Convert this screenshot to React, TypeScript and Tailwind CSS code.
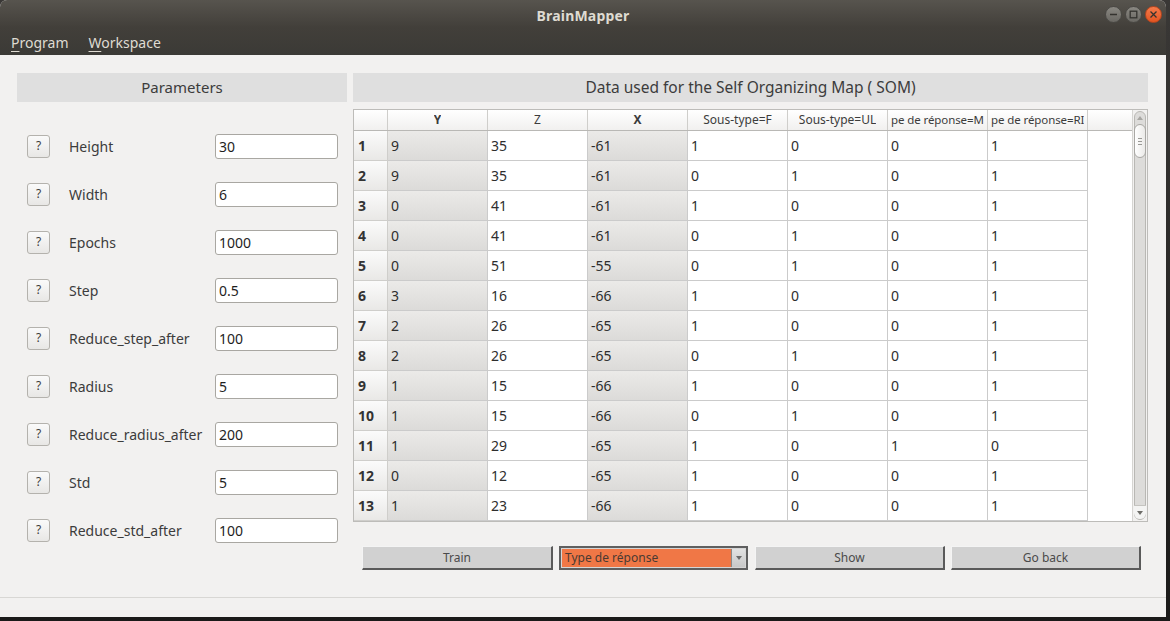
import React from 'react';

const PARAMS = [
  { label: 'Height', value: '30' },
  { label: 'Width', value: '6' },
  { label: 'Epochs', value: '1000' },
  { label: 'Step', value: '0.5' },
  { label: 'Reduce_step_after', value: '100' },
  { label: 'Radius', value: '5' },
  { label: 'Reduce_radius_after', value: '200' },
  { label: 'Std', value: '5' },
  { label: 'Reduce_std_after', value: '100' },
];

// headers wider than their column show only their middle part, as in Qt
const COLUMNS = [
  { name: 'Y', bold: true, left: false },
  { name: 'Z', bold: false, left: false },
  { name: 'X', bold: true, left: false },
  { name: 'Sous-type=F', bold: false, left: false },
  { name: 'Sous-type=UL', bold: false, left: false },
  { name: 'pe de réponse=M', bold: false, left: true },
  { name: 'pe de réponse=RI', bold: false, left: true },
];

const ROWS = [
  ['9', '35', '-61', '1', '0', '0', '1'],
  ['9', '35', '-61', '0', '1', '0', '1'],
  ['0', '41', '-61', '1', '0', '0', '1'],
  ['0', '41', '-61', '0', '1', '0', '1'],
  ['0', '51', '-55', '0', '1', '0', '1'],
  ['3', '16', '-66', '1', '0', '0', '1'],
  ['2', '26', '-65', '1', '0', '0', '1'],
  ['2', '26', '-65', '0', '1', '0', '1'],
  ['1', '15', '-66', '1', '0', '0', '1'],
  ['1', '15', '-66', '0', '1', '0', '1'],
  ['1', '29', '-65', '1', '0', '1', '0'],
  ['0', '12', '-65', '1', '0', '0', '1'],
  ['1', '23', '-66', '1', '0', '0', '1'],
  // only the top edge of row 14 peeks out below the viewport
  ['', '', '', '', '', '', ''],
];

const TitleButton: React.FC<{ kind: 'min' | 'max' | 'close' }> = ({ kind }) => (
  <div
    className={`w-[17px] h-[17px] rounded-full flex items-center justify-center border ${
      kind === 'close'
        ? 'bg-gradient-to-b from-[#f47a4a] to-[#e25420] border-[#b8461e]'
        : 'bg-gradient-to-b from-[#8a8882] to-[#6a6863] border-[#4a4945]'
    }`}
  >
    <svg width="9" height="9" viewBox="0 0 9 9" fill="none" stroke="#34332f" strokeWidth="1.3">
      {kind === 'min' && <path d="M1 4.5h7" />}
      {kind === 'max' && <rect x="1.2" y="1.2" width="6.6" height="6.6" />}
      {kind === 'close' && <path d="M1.5 1.5l6 6M7.5 1.5l-6 6" />}
    </svg>
  </div>
);

const ParamRow: React.FC<{ label: string; value: string }> = ({ label, value }) => (
  <div className="h-[48px] flex items-center">
    <div className="ml-[10px] w-[23px] h-[23px] rounded-[3px] border border-[#b4b2ad] bg-gradient-to-b from-[#fafafa] to-[#e8e7e5] flex items-center justify-center text-[12px] text-[#3c3c3c]">
      ?
    </div>
    <div className="ml-[19px] w-[146px] text-[14px] text-[#3c3c3c] whitespace-nowrap">{label}</div>
    <div className="w-[123px] h-[25px] rounded-[3px] border border-[#a9a7a2] bg-white flex items-center pl-[3px] text-[14px] text-[#1e1e1e]">
      {value}
    </div>
  </div>
);

const FlatButton: React.FC<{ label: string; width: string }> = ({ label, width }) => (
  <div
    className={`${width} h-[24px] bg-[#d1d1d1] border-t border-l border-t-[#f4f4f4] border-l-[#f4f4f4] border-b-2 border-r-2 border-b-[#5a5a5a] border-r-[#5a5a5a] flex items-center justify-center text-[12px] text-[#4a4a4a]`}
  >
    {label}
  </div>
);

const DataTable: React.FC = () => (
  <div className="mt-[7px] h-[413px] border border-[#bdbcb9] bg-white flex overflow-hidden">
    <div className="flex-1 flex flex-col overflow-hidden">
      {/* header */}
      <div className="h-[21px] flex shrink-0 bg-gradient-to-b from-[#ffffff] to-[#f1f0ef] border-b border-[#b9b8b5]">
        <div className="w-[34px] shrink-0 border-r border-[#cfcecb]" />
        {COLUMNS.map((c) => (
          <div
            key={c.name}
            className={`w-[100px] shrink-0 border-r border-[#cfcecb] flex items-center overflow-hidden whitespace-nowrap ${
              c.bold ? 'font-bold text-[12px]' : c.left ? 'text-[11.5px] tracking-[-0.1px]' : 'text-[12px]'
            } ${c.left ? 'justify-start pl-[3px]' : 'justify-center'}`}
          >
            <span className="block overflow-hidden text-clip whitespace-nowrap text-[#3c3c3c]">{c.name}</span>
          </div>
        ))}
      </div>
      {/* body */}
      {ROWS.map((r, i) => (
        <div key={i} className="h-[30px] flex shrink-0">
          <div className="w-[34px] shrink-0 bg-gradient-to-b from-[#fbfbfb] to-[#e9e8e6] border-r border-b border-[#cfcecb] flex items-center pl-[4px] text-[14px] font-bold text-[#333]">
            {r[0] === '' ? '' : i + 1}
          </div>
          {r.map((v, j) => (
            <div
              key={j}
              className={`w-[100px] shrink-0 border-r border-b border-[#cbcbcb] flex items-center pl-[3px] text-[14px] text-[#2e2e2e] ${
                j === 0 || j === 2 ? 'bg-gradient-to-b from-[#ebeae8] to-[#dcdbd9]' : 'bg-white'
              }`}
            >
              {v}
            </div>
          ))}
        </div>
      ))}
    </div>
    {/* vertical scrollbar */}
    <div className="w-[15px] shrink-0 bg-[#f2f1f0] border-l border-[#d6d5d2] flex py-[1px] pr-[1px] pl-[1px]">
      <div className="w-full rounded-[6px] bg-[#dddcda] border border-[#b9b8b4] flex flex-col items-center">
        <svg width="6" height="4" viewBox="0 0 6 4" className="mt-[4px]">
          <path d="M0 4L3 0L6 4Z" fill="#a7a6a2" />
        </svg>
        <div className="mt-[4px] w-[12px] h-[34px] rounded-[6px] bg-gradient-to-r from-[#ffffff] to-[#ebeae8] border border-[#a9a8a4] flex flex-col items-center justify-center gap-[2px]">
          <div className="w-[4px] h-px bg-[#9a9995]" />
          <div className="w-[4px] h-px bg-[#9a9995]" />
          <div className="w-[4px] h-px bg-[#9a9995]" />
        </div>
        <div className="flex-1" />
        <div className="w-[12px] h-[14px] rounded-b-[6px] bg-[#f4f4f3] border-t border-[#c5c4c0] flex items-center justify-center">
          <svg width="6" height="4" viewBox="0 0 6 4">
            <path d="M0 0L6 0L3 4Z" fill="#6d6c68" />
          </svg>
        </div>
      </div>
    </div>
  </div>
);

export default function App() {
  return (
    <div
      className="w-[1170px] h-[621px] bg-gradient-to-b from-[#3a3836] to-[#1b1a19] overflow-hidden"
      style={{ fontFamily: '"Noto Sans", "Open Sans", sans-serif' }}
    >
      <div className="w-[1166px] h-[617px] bg-[#f2f1f0] flex flex-col rounded-tr-[7px] rounded-tl-[7px] overflow-hidden">
        {/* title bar + menu */}
        <div className="bg-gradient-to-b from-[#57544e] via-[#423f3a] to-[#3b3a36] shrink-0">
          <div className="h-[30px] relative flex items-center justify-center">
            <span className="text-[14px] font-bold text-[#dfdbd2] tracking-[0.2px]">BrainMapper</span>
            <div className="absolute right-[4px] top-[6px] flex gap-[3px]">
              <TitleButton kind="min" />
              <TitleButton kind="max" />
              <TitleButton kind="close" />
            </div>
          </div>
          <div className="h-[25px] flex items-center gap-[20px] pl-[11px] text-[14px] text-[#dfdbd2]">
            <span>
              <u className="underline-offset-[3px]">P</u>rogram
            </span>
            <span>
              <u className="underline-offset-[3px]">W</u>orkspace
            </span>
          </div>
        </div>

        {/* content */}
        <div className="flex-1 flex pt-[18px] pl-[17px]">
          {/* parameters */}
          <div className="w-[330px] flex flex-col">
            <div className="h-[29px] bg-[#dfdfdf] flex items-center justify-center text-[15px] text-[#3c3c3c]">
              Parameters
            </div>
            <div className="mt-[20px] flex flex-col">
              {PARAMS.map((p) => (
                <ParamRow key={p.label} label={p.label} value={p.value} />
              ))}
            </div>
          </div>

          {/* data */}
          <div className="ml-[6px] w-[795px] flex flex-col">
            <div className="h-[29px] bg-[#dfdfdf] flex items-center justify-center text-[15.5px] text-[#3c3c3c]">
              Data used for the Self Organizing Map ( SOM)
            </div>
            <DataTable />
            <div className="mt-[24px] pl-[9px] flex items-center">
              <FlatButton label="Train" width="w-[191px]" />
              <div className="ml-[6px] w-[189px] h-[24px] border-2 border-[#5f5f5f] bg-[#d5d5d5] flex p-[1px]">
                <div className="flex-1 bg-[#f07746] flex items-center pl-[3px] text-[12px] text-[#4a3a32]">
                  Type de réponse
                </div>
                <div className="w-[14px] bg-gradient-to-b from-[#e2e2e2] to-[#c8c8c8] border-l border-[#8a8a8a] flex items-center justify-center">
                  <svg width="6" height="4" viewBox="0 0 6 4">
                    <path d="M0 0L6 0L3 4Z" fill="#6a6a6a" />
                  </svg>
                </div>
              </div>
              <div className="ml-[7px]">
                <FlatButton label="Show" width="w-[190px]" />
              </div>
              <div className="ml-[6px]">
                <FlatButton label="Go back" width="w-[190px]" />
              </div>
            </div>
          </div>
        </div>

        {/* status bar */}
        <div className="h-[20px] shrink-0 border-t border-[#d8d7d4] bg-[#f2f1f0]" />
      </div>
    </div>
  );
}
